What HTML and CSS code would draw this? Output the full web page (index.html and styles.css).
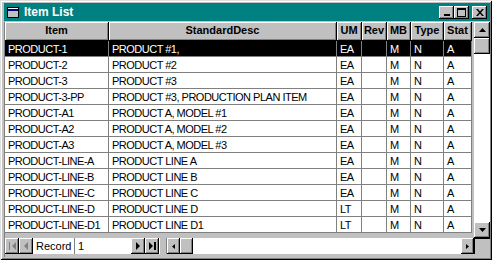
FILE: index.html
```html
<!DOCTYPE html>
<html>
<head>
<meta charset="utf-8">
<link rel="stylesheet" href="styles.css">
</head>
<body>
<div class="window">
  <div class="titlebar">
    <span class="ticon"><svg width="12" height="11" viewBox="0 0 12 11"><rect x="0.5" y="0.5" width="11" height="10" fill="#c0c0c0" stroke="#000"/><rect x="1" y="1" width="10" height="1" fill="#fff"/><rect x="1" y="2" width="10" height="2" fill="#000080"/></svg></span>
    <span class="title">Item List</span>
    <span class="tbtns">
      <span class="tbtn"><svg width="8" height="8" viewBox="0 0 8 8"><rect x="1" y="6" width="6" height="2" fill="#000"/></svg></span>
      <span class="tbtn"><svg width="9" height="9" viewBox="0 0 9 9"><rect x="0.5" y="0.5" width="8" height="8" fill="none" stroke="#000"/><rect x="0" y="0" width="9" height="2" fill="#000"/></svg></span>
      <span class="tbtn close"><svg width="8" height="7" viewBox="0 0 8 7"><path d="M0 0h2l2 2.5L6 0h2L5 3.5 8 7H6L4 4.5 2 7H0l3-3.5z" fill="#000"/></svg></span>
    </span>
  </div>
  <div class="client">
    <div class="main">
      <div class="grid">
        <div class="row head">
          <div class="c">Item</div><div class="c">StandardDesc</div><div class="c">UM</div><div class="c">Rev</div><div class="c">MB</div><div class="c">Type</div><div class="c">Stat</div>
        </div>
        <div class="row sel"><div class="c">PRODUCT-1</div><div class="c">PRODUCT #1,</div><div class="c">EA</div><div class="c"></div><div class="c">M</div><div class="c">N</div><div class="c">A</div></div>
        <div class="row"><div class="c">PRODUCT-2</div><div class="c">PRODUCT #2</div><div class="c">EA</div><div class="c"></div><div class="c">M</div><div class="c">N</div><div class="c">A</div></div>
        <div class="row"><div class="c">PRODUCT-3</div><div class="c">PRODUCT #3</div><div class="c">EA</div><div class="c"></div><div class="c">M</div><div class="c">N</div><div class="c">A</div></div>
        <div class="row"><div class="c">PRODUCT-3-PP</div><div class="c">PRODUCT #3, PRODUCTION PLAN ITEM</div><div class="c">EA</div><div class="c"></div><div class="c">M</div><div class="c">N</div><div class="c">A</div></div>
        <div class="row"><div class="c">PRODUCT-A1</div><div class="c">PRODUCT A, MODEL #1</div><div class="c">EA</div><div class="c"></div><div class="c">M</div><div class="c">N</div><div class="c">A</div></div>
        <div class="row"><div class="c">PRODUCT-A2</div><div class="c">PRODUCT A, MODEL #2</div><div class="c">EA</div><div class="c"></div><div class="c">M</div><div class="c">N</div><div class="c">A</div></div>
        <div class="row"><div class="c">PRODUCT-A3</div><div class="c">PRODUCT A, MODEL #3</div><div class="c">EA</div><div class="c"></div><div class="c">M</div><div class="c">N</div><div class="c">A</div></div>
        <div class="row"><div class="c">PRODUCT-LINE-A</div><div class="c">PRODUCT LINE A</div><div class="c">EA</div><div class="c"></div><div class="c">M</div><div class="c">N</div><div class="c">A</div></div>
        <div class="row"><div class="c">PRODUCT-LINE-B</div><div class="c">PRODUCT LINE B</div><div class="c">EA</div><div class="c"></div><div class="c">M</div><div class="c">N</div><div class="c">A</div></div>
        <div class="row"><div class="c">PRODUCT-LINE-C</div><div class="c">PRODUCT LINE C</div><div class="c">EA</div><div class="c"></div><div class="c">M</div><div class="c">N</div><div class="c">A</div></div>
        <div class="row"><div class="c">PRODUCT-LINE-D</div><div class="c">PRODUCT LINE D</div><div class="c">LT</div><div class="c"></div><div class="c">M</div><div class="c">N</div><div class="c">A</div></div>
        <div class="row"><div class="c">PRODUCT-LINE-D1</div><div class="c">PRODUCT LINE D1</div><div class="c">LT</div><div class="c"></div><div class="c">M</div><div class="c">N</div><div class="c">A</div></div>
      </div>
      <div class="vscroll">
        <div class="sbtn"><svg width="7" height="4" viewBox="0 0 7 4"><path d="M3.5 0L7 4H0z" fill="#000"/></svg></div>
        <div class="thumb"></div>
        <div class="track"></div>
        <div class="sbtn"><svg width="7" height="4" viewBox="0 0 7 4"><path d="M0 0h7L3.5 4z" fill="#000"/></svg></div>
      </div>
    </div>
    <div class="bottombar">
      <div class="nbtn dis"><svg width="7" height="8" viewBox="0 0 7 8"><rect x="0" y="0" width="1" height="8" fill="#808080"/><path d="M7 0v8L3 4z" fill="#808080"/></svg></div>
      <div class="nbtn dis"><svg width="4" height="8" viewBox="0 0 4 8"><path d="M4 0v8L0 4z" fill="#808080"/></svg></div>
      <div class="reclabel">Record</div>
      <div class="recbox">1</div>
      <div class="nbtn"><svg width="4" height="8" viewBox="0 0 4 8"><path d="M0 0v8l4-4z" fill="#000"/></svg></div>
      <div class="nbtn"><svg width="7" height="8" viewBox="0 0 7 8"><path d="M0 0v8l4-4z" fill="#000"/><rect x="5" y="0" width="2" height="8" fill="#000"/></svg></div>
      <div class="split"></div>
      <div class="hscroll">
        <div class="hbtn"><svg width="3" height="5" viewBox="0 0 3 5"><path d="M3 0v5L0 2.5z" fill="#000"/></svg></div>
        <div class="hthumb"></div>
        <div class="htrack"></div>
        <div class="hbtn"><svg width="3" height="5" viewBox="0 0 3 5"><path d="M0 0v5l3-2.5z" fill="#000"/></svg></div>
      </div>
      <div class="sizer"></div>
    </div>
  </div>
</div>
</body>
</html>
```
FILE: styles.css
```css
html, body {
  margin: 0;
  padding: 0;
  background: #c0c0c0;
}
.window {
  width: 492px;
  height: 260px;
  box-sizing: border-box;
  padding: 3px 2px 3px 4px;
  background: #c0c0c0;
  box-shadow: inset 1px 1px #dfdfdf, inset -1px -1px #000, inset 2px 2px #fff, inset -2px -2px #808080;
  display: flex;
  flex-direction: column;
}
.titlebar {
  height: 18px;
  background: #008080;
  display: flex;
  align-items: center;
  color: #fff;
  font: bold 12px "Liberation Sans", Arial, sans-serif;
}
.ticon {
  display: flex;
  margin-left: 3px;
  width: 12px;
  height: 11px;
}
.title {
  margin-left: 5px;
  flex: 1;
}
.tbtns {
  display: flex;
  margin-right: 3px;
}
.tbtn {
  width: 15px;
  height: 13px;
  box-sizing: border-box;
  background: #c0c0c0;
  box-shadow: inset -1px -1px #000, inset 1px 1px #fff, inset -2px -2px #808080;
  display: flex;
  align-items: center;
  justify-content: center;
}
.tbtn.close {
  margin-left: 3px;
}
.client {
  margin-top: 1px;
  flex: 1;
  display: flex;
  flex-direction: column;
  border-left: 1px solid #808080;
}
.main {
  display: flex;
  height: 216px;
}
.grid {
  width: 469px;
  font: 11px "Liberation Sans", Arial, sans-serif;
  letter-spacing: -0.5px;
}
.row {
  display: grid;
  grid-template-columns: 104px 228px 25px 25px 24px 33px 28px;
  height: 16px;
}
.row .c {
  box-sizing: border-box;
  background: #fff;
  color: #000;
  border-right: 1px solid #808080;
  border-bottom: 1px solid #808080;
  padding-left: 3px;
  line-height: 16px;
  white-space: nowrap;
  overflow: hidden;
}
.row.sel .c {
  background: #000;
  color: #fff;
}
.row.head {
  height: 19px;
}
.row.head .c {
  background: #c0c0c0;
  font: bold 11px "Liberation Sans", Arial, sans-serif;
  letter-spacing: 0;
  text-align: center;
  padding: 0;
  line-height: 17px;
  border-right: 1px solid #000;
  border-bottom: 1px solid #000;
  box-shadow: inset 1px 1px #fff, inset -1px -1px #808080;
}
.vscroll {
  width: 16px;
  display: flex;
  flex-direction: column;
  margin-left: 1px;
}
.sbtn, .thumb {
  height: 16px;
  box-sizing: border-box;
  background: #c0c0c0;
  box-shadow: inset -1px -1px #000, inset 1px 1px #fff, inset -2px -2px #808080;
  display: flex;
  align-items: center;
  justify-content: center;
}
.track {
  flex: 1;
  background: #fff;
}
.bottombar {
  display: flex;
  height: 16px;
  margin-top: 0;
  align-items: stretch;
  font: 11px "Liberation Sans", Arial, sans-serif;
}
.nbtn {
  width: 14px;
  box-sizing: border-box;
  background: #c0c0c0;
  box-shadow: inset -1px -1px #000, inset 1px 1px #fff, inset -2px -2px #808080;
  display: flex;
  align-items: center;
  justify-content: center;
}
.reclabel {
  width: 42px;
  background: #fff;
  padding-left: 3px;
  box-sizing: border-box;
  line-height: 16px;
  border-right: 1px solid #808080;
}
.recbox {
  width: 56px;
  background: #fff;
  padding-left: 3px;
  box-sizing: border-box;
  line-height: 16px;
}
.split {
  width: 8px;
  border-left: 1px solid #fff;
  border-right: 1px solid #808080;
  box-sizing: border-box;
}
.hscroll {
  flex: 1;
  display: flex;
}
.hbtn, .hthumb {
  width: 13px;
  box-sizing: border-box;
  background: #c0c0c0;
  box-shadow: inset -1px -1px #000, inset 1px 1px #fff, inset -2px -2px #808080;
  display: flex;
  align-items: center;
  justify-content: center;
}
.htrack {
  flex: 1;
  background: #fff;
}
.sizer {
  width: 16px;
  box-sizing: border-box;
  border-top: 1px solid #000;
  border-left: 1px solid #000;
  background: #c0c0c0;
}
```
